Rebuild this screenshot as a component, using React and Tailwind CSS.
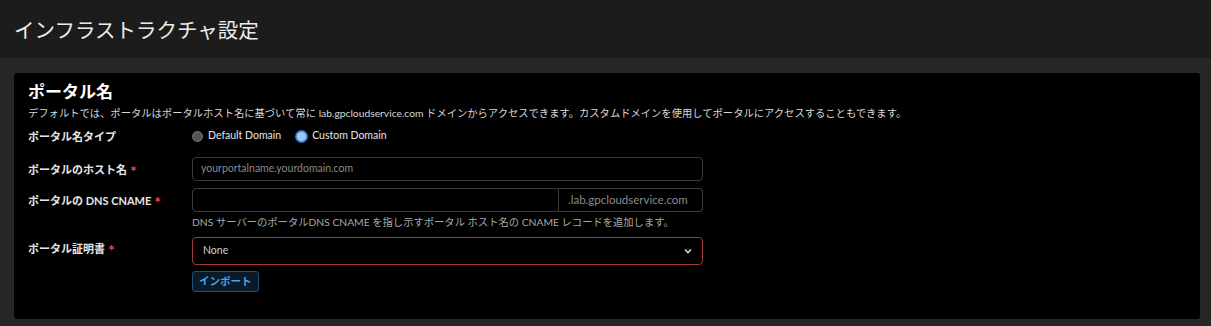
import React from "react";

const font = { fontFamily: "Lato, 'Noto Sans CJK JP', sans-serif" };

const Label = ({ children, required }) => (
  <div className="text-[11px] font-bold text-[#e6e6e6] leading-none flex items-center">
    {children}
    {required && <span className="text-[#e5484d] text-[16px] font-bold ml-[3px] leading-none mt-[4px]">*</span>}
  </div>
);

const Radio = ({ checked, label }) => (
  <label className="flex items-center gap-[5px] text-[10.5px] text-[#e6e6e6]">
    {checked ? (
      <span className="w-[11px] h-[11px] rounded-full border border-[#4a90d9] bg-[#9cc8f5] ring-1 ring-[#2f6fb3]" />
    ) : (
      <span className="w-[11px] h-[11px] rounded-full border border-[#777] bg-[#555]" />
    )}
    {label}
  </label>
);

export default function App() {
  return (
    <div className="w-[1211px] h-[326px] bg-[#262626] flex flex-col" style={font}>
      <div className="h-[58px] bg-[#1c1c1c] flex items-center pl-[14px] pt-[3px] shrink-0">
        <h1 className="text-[20.5px] text-[#ececec] font-normal">インフラストラクチャ設定</h1>
      </div>
      <div className="flex-1 pt-[15px] pl-[14px] pr-[11px] pb-[7px]">
        <div className="h-full bg-black rounded-[3px] pl-[14px] pt-[8px]">
          <h2 className="text-[17px] font-bold text-white leading-[22px]">ポータル名</h2>
          <p className="text-[10.3px] text-[#d8d8d8] mt-[2px] leading-[16px] whitespace-nowrap">
            デフォルトでは、ポータルはポータルホスト名に基づいて常に lab.gpcloudservice.com ドメインからアクセスできます。カスタムドメインを使用してポータルにアクセスすることもできます。
          </p>
          <div className="grid grid-cols-[164px_511px] mt-[4px]">
            <div className="h-[22px] flex items-center pt-[1px]">
              <Label>ポータル名タイプ</Label>
            </div>
            <div className="h-[22px] flex items-center gap-[15px]">
              <Radio label="Default Domain" />
              <Radio checked label="Custom Domain" />
            </div>

            <div className="mt-[10px] h-[24px] flex items-center">
              <Label required>ポータルのホスト名</Label>
            </div>
            <div className="mt-[10px] h-[24px] border border-[#3a3a3a] rounded-[4px] flex items-center px-[8px] text-[10.5px] text-[#8a8a8a]">
              yourportalname.yourdomain.com
            </div>

            <div className="mt-[7px] h-[24px] flex items-center">
              <Label required>ポータルの DNS CNAME</Label>
            </div>
            <div className="mt-[7px]">
              <div className="h-[24px] flex">
                <div className="w-[367px] border border-[#3a3a3a] rounded-l-[4px]" />
                <div className="flex-1 border border-l-0 border-[#3a3a3a] rounded-r-[4px] flex items-center px-[9px] text-[11.5px] text-[#8a8a8a]">
                  .lab.gpcloudservice.com
                </div>
              </div>
              <div className="text-[10.3px] text-[#a8a8a8] mt-[2px] leading-[16px] whitespace-nowrap">
                DNS サーバーのポータルDNS CNAME を指し示すポータル ホスト名の CNAME レコードを追加します。
              </div>
            </div>

            <div className="mt-[7px] h-[22px] flex items-center">
              <Label required>ポータル証明書</Label>
            </div>
            <div className="mt-[7px]">
              <div className="h-[28px] border border-[#a33a3a] rounded-[4px] flex items-center justify-between pl-[10px] pr-[9px] text-[10.5px] text-[#d0d0d0]">
                <span>None</span>
                <svg width="10" height="10" viewBox="0 0 10 10">
                  <path d="M2 3.5 L5 6.5 L8 3.5" fill="none" stroke="#cfcfcf" strokeWidth="1.6" />
                </svg>
              </div>
              <button className="mt-[6px] h-[21px] px-[6px] border border-[#1d4f7a] bg-[#0b1a28] rounded-[3px] text-[10.5px] font-bold text-[#4aa3f0] leading-none">
                インポート
              </button>
            </div>
          </div>
        </div>
      </div>
    </div>
  );
}
